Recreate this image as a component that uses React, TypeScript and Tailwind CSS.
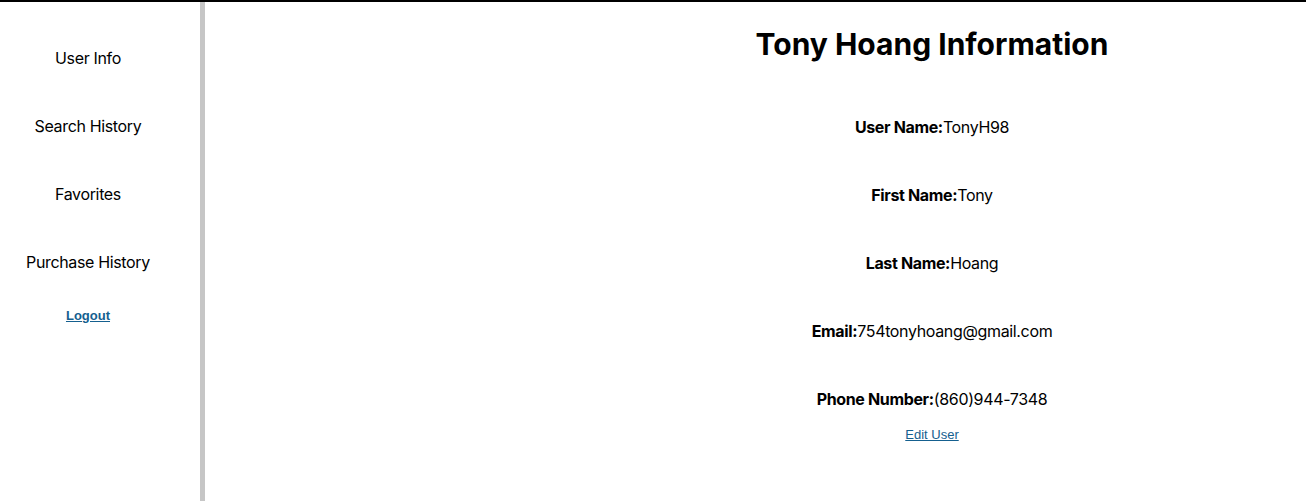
import React from 'react'

const fields = [
  { label: 'User Name:', value: 'TonyH98' },
  { label: 'First Name:', value: 'Tony' },
  { label: 'Last Name:', value: 'Hoang' },
  { label: 'Email:', value: '754tonyhoang@gmail.com' },
  { label: 'Phone Number:', value: '(860)944-7348' },
]

const navItems = ['User Info', 'Search History', 'Favorites', 'Purchase History']

export default function App() {
  return (
    <div className="flex h-[501px] border-t-2 border-black bg-white text-black font-['Inter',sans-serif]">
      {/* Sidebar */}
      <aside className="w-[205px] shrink-0 border-r-[5px] border-[#c6c6c6] pr-[24px] flex flex-col items-center">
        <nav className="flex flex-col items-center gap-[44px] pt-[44px]">
          {navItems.map((item) => (
            <span key={item} className="text-base leading-6 tracking-[-0.35px]">
              {item}
            </span>
          ))}
        </nav>
        <a
          href="#"
          className="mt-[34px] text-[13px] leading-4 font-bold underline text-[#15608f] font-['Liberation_Sans',Arial,sans-serif]"
        >
          Logout
        </a>
      </aside>

      {/* Main */}
      <main className="flex-1 pl-[353px] flex flex-col items-center">
        <h1 className="mt-[24px] text-[30px] leading-9 font-bold">Tony Hoang Information</h1>
        <div className="mt-[53px] flex flex-col items-center gap-[44px]">
          {fields.map((f) => (
            <p key={f.label} className="text-base leading-6 tracking-[-0.35px]">
              <span className="font-bold">{f.label}</span>
              {f.value}
            </p>
          ))}
        </div>
        <a
          href="#"
          className="mt-[16px] text-[13px] leading-4 underline text-[#15608f] font-['Liberation_Sans',Arial,sans-serif]"
        >
          Edit User
        </a>
      </main>
    </div>
  )
}
